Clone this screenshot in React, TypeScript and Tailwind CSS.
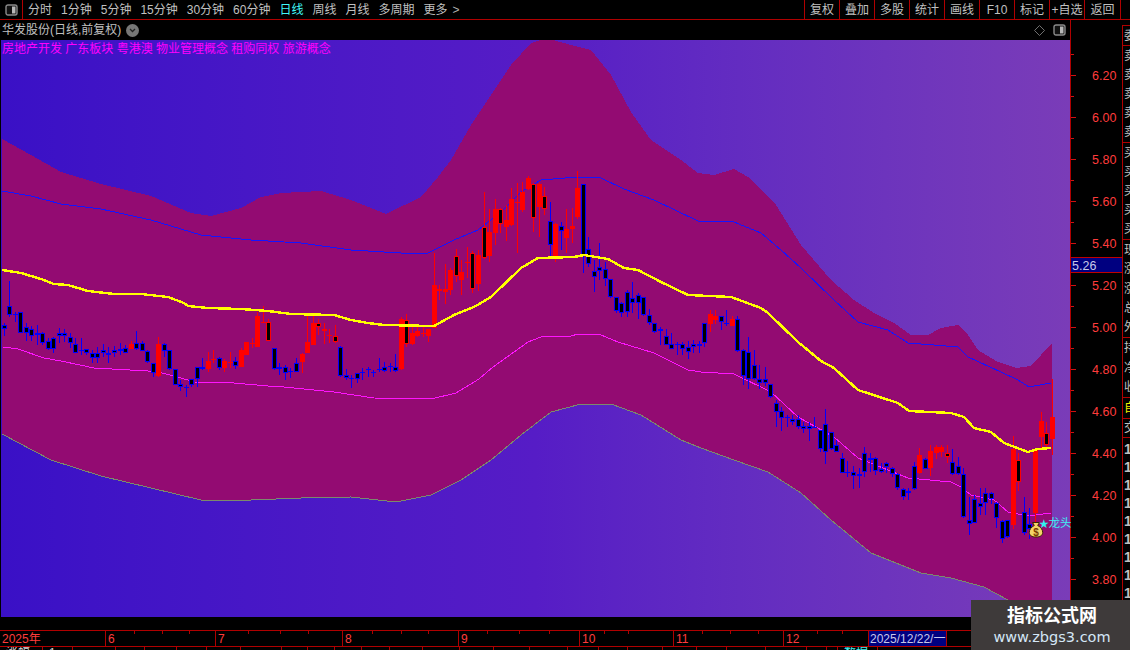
import React from 'react';

type Candle = ['b' | 'r' | 'k', number, number, number, number];
type Pt = [number, number];

const FONT = "font-['Liberation_Sans','Noto_Sans_CJK_SC',sans-serif]";

// body top, body bottom, wick top, wick bottom, read off in 3x crops; y0 is the crop's top
const seg = (y0: number, rows: Candle[]): Candle[] =>
  rows.map(([t, a, b, c, d]) => [t, y0 + a / 3, y0 + b / 3, y0 + c / 3, y0 + d / 3]);

const candles: Candle[] = [
  ...seg(270, [
    ['b', 166, 178, 160, 197], ['b', 108, 134, 33, 140], ['b', 132, 132, 125, 155], ['b', 127, 190, 127, 190],
    ['b', 172, 190, 160, 212], ['b', 178, 197, 168, 212], ['b', 190, 195, 165, 225], ['b', 190, 218, 185, 225],
    ['b', 212, 236, 205, 240], ['b', 203, 236, 200, 250], ['b', 190, 197, 175, 218], ['b', 190, 197, 178, 215],
    ['b', 202, 218, 190, 235], ['b', 223, 248, 205, 250], ['b', 240, 240, 203, 255], ['b', 236, 248, 236, 255],
    ['b', 248, 265, 240, 278], ['b', 248, 265, 232, 280], ['b', 240, 248, 222, 262], ['b', 248, 254, 232, 280],
    ['b', 240, 248, 228, 262], ['b', 236, 242, 218, 256], ['b', 235, 248, 225, 250], ['r', 222, 236, 212, 238],
    ['b', 218, 236, 183, 240], ['b', 218, 242, 212, 243], ['b', 242, 275, 240, 278], ['b', 280, 310, 280, 322],
    ['r', 222, 318, 200, 320], ['b', 222, 242, 218, 262], ['b', 240, 298, 240, 300], ['b', 298, 344, 298, 345],
    ['b', 342, 350, 330, 362], ['b', 352, 352, 345, 380], ['b', 328, 344, 326, 350], ['b', 292, 328, 290, 350],
    ['b', 292, 298, 265, 300], ['r', 274, 298, 245, 305], ['r', 266, 266, 240, 280], ['b', 265, 293, 262, 300],
    ['r', 274, 293, 268, 305], ['k', 276, 280, 245, 295], ['b', 274, 288, 262, 296], ['r', 240, 292, 235, 292],
    ['r', 216, 254, 216, 255], ['k', 218, 222, 205, 235], ['r', 138, 230, 125, 232], ['r', 155, 155, 108, 160],
    ['k', 155, 212, 148, 212], ['b', 235, 298, 235, 300], ['b', 292, 298, 280, 315], ['b', 292, 310, 285, 330],
    ['b', 303, 303, 295, 325], ['b', 280, 305, 265, 306], ['r', 252, 275, 250, 308], ['r', 216, 248, 138, 250],
    ['r', 160, 224, 130, 224], ['k', 160, 172, 148, 195], ['k', 178, 184, 160, 222], ['r', 196, 196, 178, 218],
    ['k', 197, 216, 165, 218], ['b', 230, 317, 228, 320], ['b', 316, 323, 298, 330], ['b', 325, 325, 315, 355],
    ['b', 310, 328, 308, 340], ['b', 305, 310, 295, 330], ['b', 296, 296, 292, 322], ['b', 305, 310, 300, 320],
    ['b', 298, 298, 265, 305], ['b', 292, 303, 275, 305], ['b', 287, 292, 280, 305], ['b', 292, 303, 252, 305],
    ['r', 148, 298, 140, 300], ['k', 150, 222, 132, 230], ['r', 190, 223, 165, 225], ['r', 183, 197, 170, 200],
    ['r', 190, 190, 172, 200], ['r', 178, 197, 178, 215],
  ]),
  ...seg(160, [
    ['r', 375, 503, 280, 505], ['k', 388, 393, 375, 420], ['r', 388, 395, 312, 432], ['r', 330, 390, 325, 405],
    ['k', 288, 348, 268, 365], ['r', 336, 360, 300, 405], ['r', 307, 307, 262, 355], ['k', 280, 388, 272, 398],
    ['r', 286, 372, 270, 392], ['k', 200, 295, 95, 297], ['r', 216, 288, 148, 305], ['r', 148, 218, 118, 255],
    ['k', 148, 192, 145, 218], ['r', 180, 200, 135, 243], ['r', 118, 195, 85, 198], ['r', 125, 130, 68, 278],
    ['r', 95, 150, 65, 155], ['r', 55, 87, 47, 90], ['k', 73, 175, 70, 215], ['r', 72, 142, 70, 230],
    ['k', 107, 148, 80, 165], ['b', 182, 256, 125, 298], ['r', 192, 288, 190, 305], ['b', 199, 212, 185, 270],
    ['r', 208, 234, 148, 278], ['r', 198, 206, 145, 250], ['r', 83, 170, 33, 178], ['b', 73, 287, 72, 338],
    ['b', 268, 313, 232, 320], ['b', 332, 350, 300, 395], ['b', 320, 332, 250, 360], ['b', 326, 358, 305, 378],
    ['b', 358, 412, 358, 415], ['b', 412, 452, 412, 458], ['b', 428, 458, 425, 470], ['b', 395, 457, 390, 470],
    ['b', 413, 428, 365, 458], ['b', 406, 428, 400, 478], ['b', 412, 465, 412, 468], ['b', 464, 490, 448, 495],
    ['b', 490, 515, 490, 518], ['b', 508, 514, 500, 555], ['b', 527, 554, 508, 555], ['b', 553, 566, 520, 566],
    ['b', 552, 552, 546, 585], ['b', 553, 566, 546, 585], ['b', 560, 577, 542, 598], ['b', 553, 560, 540, 578],
    ['b', 553, 559, 542, 578], ['b', 490, 548, 488, 560], ['r', 462, 492, 450, 515], ['r', 467, 480, 450, 492],
    ['b', 468, 485, 468, 510], ['b', 490, 490, 450, 498], ['r', 478, 498, 468, 498], ['b', 478, 572, 468, 575],
  ]),
  ...seg(300, [
    ['b', 150, 228, 148, 256], ['b', 157, 238, 112, 266], ['b', 195, 238, 150, 240], ['b', 238, 248, 195, 266],
    ['b', 238, 248, 200, 258], ['b', 253, 290, 253, 295], ['b', 310, 335, 300, 380], ['b', 333, 353, 320, 392],
    ['b', 350, 350, 345, 382], ['b', 358, 365, 345, 375], ['b', 358, 380, 345, 388], ['b', 378, 387, 365, 398],
    ['b', 378, 387, 365, 422], ['b', 380, 380, 350, 385], ['b', 390, 448, 390, 455], ['b', 373, 455, 326, 492],
    ['b', 396, 448, 396, 450], ['b', 435, 455, 420, 455], ['b', 473, 518, 460, 520], ['b', 516, 516, 483, 530],
    ['b', 517, 528, 498, 568], ['b', 523, 528, 505, 565], ['b', 460, 517, 442, 530], ['b', 473, 480, 460, 515],
    ['b', 473, 512, 470, 525], ['b', 506, 516, 490, 518], ['b', 490, 500, 485, 518], ['b', 505, 523, 500, 530],
    ['b', 522, 564, 518, 570], ['b', 567, 592, 565, 600], ['b', 573, 580, 565, 600], ['b', 498, 568, 485, 570],
    ['r', 465, 518, 445, 522], ['b', 478, 506, 475, 508], ['r', 453, 505, 435, 528], ['r', 441, 460, 435, 478],
    ['r', 441, 455, 435, 470], ['k', 460, 472, 435, 488], ['b', 485, 522, 447, 524], ['b', 498, 522, 470, 525],
  ]),
  ...seg(380, [
    ['b', 283, 410, 265, 415], ['b', 420, 433, 350, 465], ['b', 358, 428, 345, 430], ['b', 370, 380, 325, 405],
    ['b', 340, 370, 325, 405], ['b', 340, 358, 335, 372], ['b', 370, 415, 365, 443], ['b', 422, 478, 420, 490],
    ['b', 420, 472, 420, 475], ['r', 208, 435, 168, 448], ['k', 240, 305, 220, 333], ['b', 397, 460, 352, 465],
    ['b', 432, 448, 385, 478], ['r', 208, 400, 208, 430], ['r', 123, 170, 95, 205], ['k', 158, 195, 125, 205],
    ['r', 112, 177, -4, 225],
  ]),
];

const upper: Pt[] = [
  [1, 139], [30, 155], [60, 172], [100, 184], [150, 196], [190, 213], [210, 216], [240, 208], [260, 197], [280, 193],
  [320, 191], [350, 200], [385, 214], [420, 197], [437, 177], [450, 160], [470, 125], [490, 95], [510, 65], [530, 43],
  [545, 38], [570, 45], [590, 50], [610, 75], [630, 112], [650, 140], [680, 160], [697, 173], [713, 175], [733, 169],
  [747, 177], [760, 190], [775, 205], [800, 245], [830, 280], [853, 300], [873, 313], [893, 323], [910, 335], [927, 335],
  [940, 328], [957, 325], [967, 335], [977, 350], [997, 362], [1015, 368], [1030, 366], [1051, 343],
];

const lower: Pt[] = [
  [1, 434], [50, 460], [100, 476], [150, 488], [200, 500], [250, 500], [300, 498], [350, 497], [395, 502], [430, 495],
  [460, 480], [490, 460], [520, 435], [550, 412], [580, 404], [610, 404], [640, 415], [680, 440], [700, 448], [733, 460],
  [767, 472], [800, 493], [830, 520], [870, 553], [920, 573], [950, 578], [983, 587], [1007, 600], [1051, 620],
];

const blue: Pt[] = [
  [1, 191], [30, 196], [60, 204], [100, 209], [150, 220], [200, 235], [250, 240], [300, 243], [350, 250], [400, 253],
  [427, 253], [453, 240], [477, 230], [500, 212], [520, 192], [540, 180], [577, 177], [600, 178], [623, 189], [653, 200],
  [697, 221], [733, 222], [760, 233], [780, 250], [800, 268], [833, 300], [857, 322], [887, 330], [907, 343], [933, 345],
  [957, 347], [967, 357], [1000, 372], [1017, 380], [1028, 387], [1050, 383],
];

const yellow: Pt[] = [
  [1, 270], [20, 273], [40, 279], [53, 284], [67, 285], [87, 291], [113, 294], [140, 294], [167, 297], [183, 303],
  [187, 306], [207, 308], [240, 309], [267, 311], [290, 314], [333, 315], [350, 320], [367, 323], [383, 325], [433, 326],
  [453, 315], [473, 307], [490, 297], [520, 268], [537, 258], [573, 257], [583, 255], [607, 259], [623, 268], [637, 270],
  [660, 282], [687, 295], [730, 297], [760, 308], [767, 313], [797, 342], [820, 361], [833, 368], [857, 390], [897, 403],
  [908, 411], [950, 413], [963, 417], [973, 428], [990, 432], [1003, 443], [1027, 452], [1037, 449], [1050, 448],
];

const magenta: Pt[] = [
  [2, 347], [17, 349], [43, 358], [60, 361], [93, 368], [147, 371], [157, 372], [177, 377], [193, 382], [233, 383],
  [267, 386], [283, 387], [333, 392], [373, 398], [430, 399], [455, 393], [478, 379], [492, 367], [527, 342], [540, 337],
  [570, 336], [577, 334], [600, 335], [617, 342], [653, 353], [687, 370], [700, 372], [733, 374], [770, 392], [797, 417],
  [833, 437], [857, 458], [887, 470], [907, 478], [950, 482], [960, 487], [970, 495], [993, 500], [1007, 512], [1027, 516],
  [1050, 513],
];

const pts = (list: Pt[]) => list.map(p => p.join(',')).join(' ');

const periods = ['分时', '1分钟', '5分钟', '15分钟', '30分钟', '60分钟', '日线', '周线', '月线', '多周期', '更多'];
const tools = ['复权', '叠加', '多股', '统计', '画线', 'F10', '标记', '+自选', '返回'];
const prices = ['6.20', '6.00', '5.80', '5.60', '5.40', '5.20', '5.00', '4.80', '4.60', '4.40', '4.20', '4.00', '3.80'];

const months = [
  { label: '2025年', width: 106, ticks: [] as number[] },
  { label: '6', width: 110, ticks: [28, 56, 83] },
  { label: '7', width: 127, ticks: [32, 64, 92] },
  { label: '8', width: 116, ticks: [29, 58, 85] },
  { label: '9', width: 121, ticks: [28, 60, 90] },
  { label: '10', width: 94, ticks: [24, 48] },
  { label: '11', width: 110, ticks: [28, 56, 84] },
  { label: '12', width: 85, ticks: [33, 58] },
];

const statusCells: { w: number; text?: string; cls?: string }[] = [
  { w: 43, text: '涨幅' }, { w: 30, text: '1' }, { w: 43 }, { w: 29 }, { w: 32 }, { w: 30 }, { w: 34 }, { w: 41 }, { w: 26 },
  { w: 27 }, { w: 27 }, { w: 28 }, { w: 33 }, { w: 37 }, { w: 34 }, { w: 36 }, { w: 38 }, { w: 31 }, { w: 29 }, { w: 35 },
  { w: 34 }, { w: 30 }, { w: 39 }, { w: 41 }, { w: 20, text: '一' }, { w: 11 }, { w: 40, text: '数据', cls: 'text-[#40f0f0]' },
];

const SideGroup = ({ chars, cls = 'text-[#c0c0c0]' }: { chars: string[]; cls?: string }) => (
  <div className={`flex min-w-0 flex-1 flex-col overflow-hidden border-b border-l border-[#b00000] ${cls}`}>
    {chars.map((c, i) => (
      <div key={i} className="flex flex-1 items-center overflow-hidden pl-px text-xs leading-none">
        {c}
      </div>
    ))}
  </div>
);

const PanelIcon = () => (
  <svg width="13" height="12" viewBox="0 0 13 12">
    <rect x="1" y="1" width="11" height="10" rx="2" fill="#111" stroke="#8a8a8a" strokeWidth="1.4" />
    <rect x="7" y="2.5" width="3.5" height="7" fill="#b8b8b8" />
  </svg>
);

const Chart = () => (
  <svg className="absolute inset-0" width="1070" height="577" viewBox="0 40 1070 577" shapeRendering="crispEdges">
    <polygon points={pts([...upper, ...[...lower].reverse()])} fill="#930b72" />
    <polyline points={pts(lower)} fill="none" stroke="#7c8a6c" strokeWidth="1" />
    <polyline points={pts(blue)} fill="none" stroke="#1414ff" strokeWidth="1" />
    <polyline points={pts(magenta)} fill="none" stroke="#ff14ff" strokeWidth="1" />
    {candles.map(([type, bt, bb, wt, wb], i) => {
      const x = Math.round(2.7 + i * 5.515);
      const color = type === 'b' ? '#0000ff' : '#ff0000';
      const top = Math.round(bt);
      const h = Math.max(1, Math.round(bb) - top);
      return (
        <g key={i}>
          <rect x={x} y={Math.round(wt)} width="1" height={Math.round(wb) - Math.round(wt)} fill={color} />
          <rect x={x - 2} y={top} width="5" height={h} fill={color} />
          {type !== 'r' && h > 2 && <rect x={x - 1} y={top + 1} width="3" height={h - 2} fill="#000" />}
        </g>
      );
    })}
    <polyline points={pts(yellow)} fill="none" stroke="#ffff00" strokeWidth="2.4" />
    {/* money bag marker */}
    <g shapeRendering="auto">
      <path
        d="M1031.5 522.5h7l-1.8 3c3.2 1.6 5 4.2 5 7 0 3-2.8 4.5-6.7 4.5s-6.7-1.5-6.7-4.5c0-2.8 1.8-5.4 5-7z"
        fill="#f4d468"
        stroke="#3a2600"
        strokeWidth="1"
      />
      <text x="1035" y="536" textAnchor="middle" fontSize="10" fontWeight="700" fill="#7a3c00" fontFamily="Liberation Sans">
        $
      </text>
      <text x="1037.5" y="527.5" fontSize="12" fill="#30f0f0" fontFamily="DejaVu Sans">
        ★
      </text>
      <text x="1047.5" y="527" fontSize="11.5" fill="#40f0f0" fontFamily="Noto Sans CJK SC">
        龙头
      </text>
    </g>
  </svg>
);

const PriceAxis = () => (
  <svg className="shrink-0" width="51" height="610" viewBox="1071 20 51 610" shapeRendering="crispEdges">
    {prices.map((p, i) => {
      const y = 75 + i * 42;
      return (
        <g key={p}>
          <rect x="1071" y={y} width="5" height="1" fill="#d01010" />
          <rect x="1071" y={y + 21} width="3" height="1" fill="#d01010" />
          <text
            x="1092"
            y={y + 5}
            fontSize="12.5"
            fill="#ff3c3c"
            fontFamily="Liberation Sans"
            shapeRendering="auto"
          >
            {p}
          </text>
        </g>
      );
    })}
    <rect x="1071" y="54" width="3" height="1" fill="#d01010" />
    <rect x="1071" y="257" width="51" height="16" fill="#c00000" />
    <rect x="1071" y="258" width="51" height="14" fill="#000080" />
    <text x="1072" y="269.5" fontSize="12.5" fill="#c8c8e8" fontFamily="Liberation Sans" shapeRendering="auto">
      5.26
    </text>
  </svg>
);

export default function App() {
  return (
    <div className={`relative h-[650px] w-[1130px] overflow-hidden bg-black ${FONT}`}>
      <div className="flex h-5 items-stretch border-b border-[#b00000] text-xs leading-none text-[#c0c0c0]">
        <div className="flex w-[23px] items-center justify-center border-r border-[#b00000]">
          <PanelIcon />
        </div>
        <div className="flex flex-1 items-center gap-[9px] pl-[5px]">
          {periods.map(p => (
            <span key={p} className={p === '日线' ? 'text-[#40f8f8]' : ''}>
              {p}
            </span>
          ))}
          <span className="-ml-[4px] text-[#b0b0b0]">&gt;</span>
        </div>
        <div className="mr-[9px] flex">
          {tools.map(t => (
            <div key={t} className="flex w-[35px] items-center justify-center border-l border-[#b00000] last:w-[37px] last:border-r">
              {t}
            </div>
          ))}
        </div>
      </div>

      <div className="flex h-[610px]">
        <div className="w-[1071px] shrink-0 border-r border-[#b00000]">
          <div className="flex h-5 items-center px-[2px] text-xs text-[#c0c0c0]">
            <span>华发股份(日线,前复权)</span>
            <span className="ml-[5px] flex h-[13px] w-[13px] items-center justify-center rounded-full bg-[#777]">
              <svg width="7" height="5" viewBox="0 0 7 5">
                <path d="M1 1l2.5 2.5L6 1" fill="none" stroke="#222" strokeWidth="1.3" />
              </svg>
            </span>
            <div className="ml-auto flex items-center gap-[8px] pr-[2px]">
              <svg width="11" height="11" viewBox="0 0 11 11">
                <path d="M5.5.5l5 5-5 5-5-5z" fill="none" stroke="#707070" />
              </svg>
              <PanelIcon />
            </div>
          </div>
          <div className="relative ml-px h-[577px] bg-linear-to-r from-[#3a10c6] via-[#561cc6] to-[#7a3cb8]">
            <Chart />
            <div className="absolute top-[1px] left-px text-xs whitespace-pre text-[#ff00ff]">
              房地产开发 广东板块 粤港澳 物业管理概念 租购同权 旅游概念
            </div>
          </div>
        </div>
        <PriceAxis />
        <div className="flex min-w-0 flex-1 flex-col overflow-hidden pt-[5px]">
          <div className="flex h-[21px] border-t border-[#b00000]">
            <SideGroup chars={['委']} />
          </div>
          <div className="flex h-[97px]"><SideGroup chars={['卖', '卖', '卖', '卖', '卖']} /></div>
          <div className="flex h-[97px]"><SideGroup chars={['买', '买', '买', '买', '买']} /></div>
          <div className="flex h-[98px]"><SideGroup chars={['现', '涨', '涨', '总', '外']} /></div>
          <div className="flex h-[60px]"><SideGroup chars={['持', '净', '收']} /></div>
          <div className="flex h-[21px]"><SideGroup chars={['自']} cls="text-[#f0f000]" /></div>
          <div className="flex h-[19px]"><SideGroup chars={['交']} /></div>
          <div className="flex flex-1 flex-col overflow-hidden border-l border-[#b00000] pt-[2px] text-sm leading-[18px] font-bold text-[#c0c0c0]">
            {[0, 1, 2, 3, 4, 5, 6, 7, 8, 9].map(i => (
              <div key={i} className="h-[18px] shrink-0 pl-[1px]">
                1
              </div>
            ))}
          </div>
        </div>
      </div>

      <div className="flex h-[17px] border-y border-[#b00000] text-xs leading-[16px] text-[#ff3c3c]">
        {months.map(m => (
          <div key={m.label} className="relative border-r border-[#b00000] pl-[2px]" style={{ width: m.width }}>
            {m.label}
            {m.ticks.map(t => (
              <span key={t} className="absolute top-0 h-[3px] w-px bg-[#b00000]" style={{ left: t }} />
            ))}
          </div>
        ))}
        <div className="w-[78px] border-r border-[#b00000] bg-[#000080] pl-px whitespace-nowrap text-[#c8c8e8]">2025/12/22/一</div>
      </div>

      <div className="flex h-[3px] overflow-hidden text-xs leading-[12px] text-[#d8d8d8]">
        {statusCells.map((c, i) => (
          <div key={i} className={`shrink-0 border-r border-[#b00000] pl-[6px] ${c.cls ?? ''}`} style={{ width: c.w }}>
            {c.text}
          </div>
        ))}
      </div>

      <div className="absolute right-0 bottom-0 flex h-[50px] w-[159px] flex-col items-center bg-[#3e3a3a] pt-[3px] pl-[3px] text-white">
        <div className="text-lg leading-[26px] font-bold">指标公式网</div>
        <div className="font-['DejaVu_Sans',sans-serif] text-[14.5px] leading-[16px] text-[#d4e6f6]">www.zbgs3.com</div>
      </div>
    </div>
  );
}
